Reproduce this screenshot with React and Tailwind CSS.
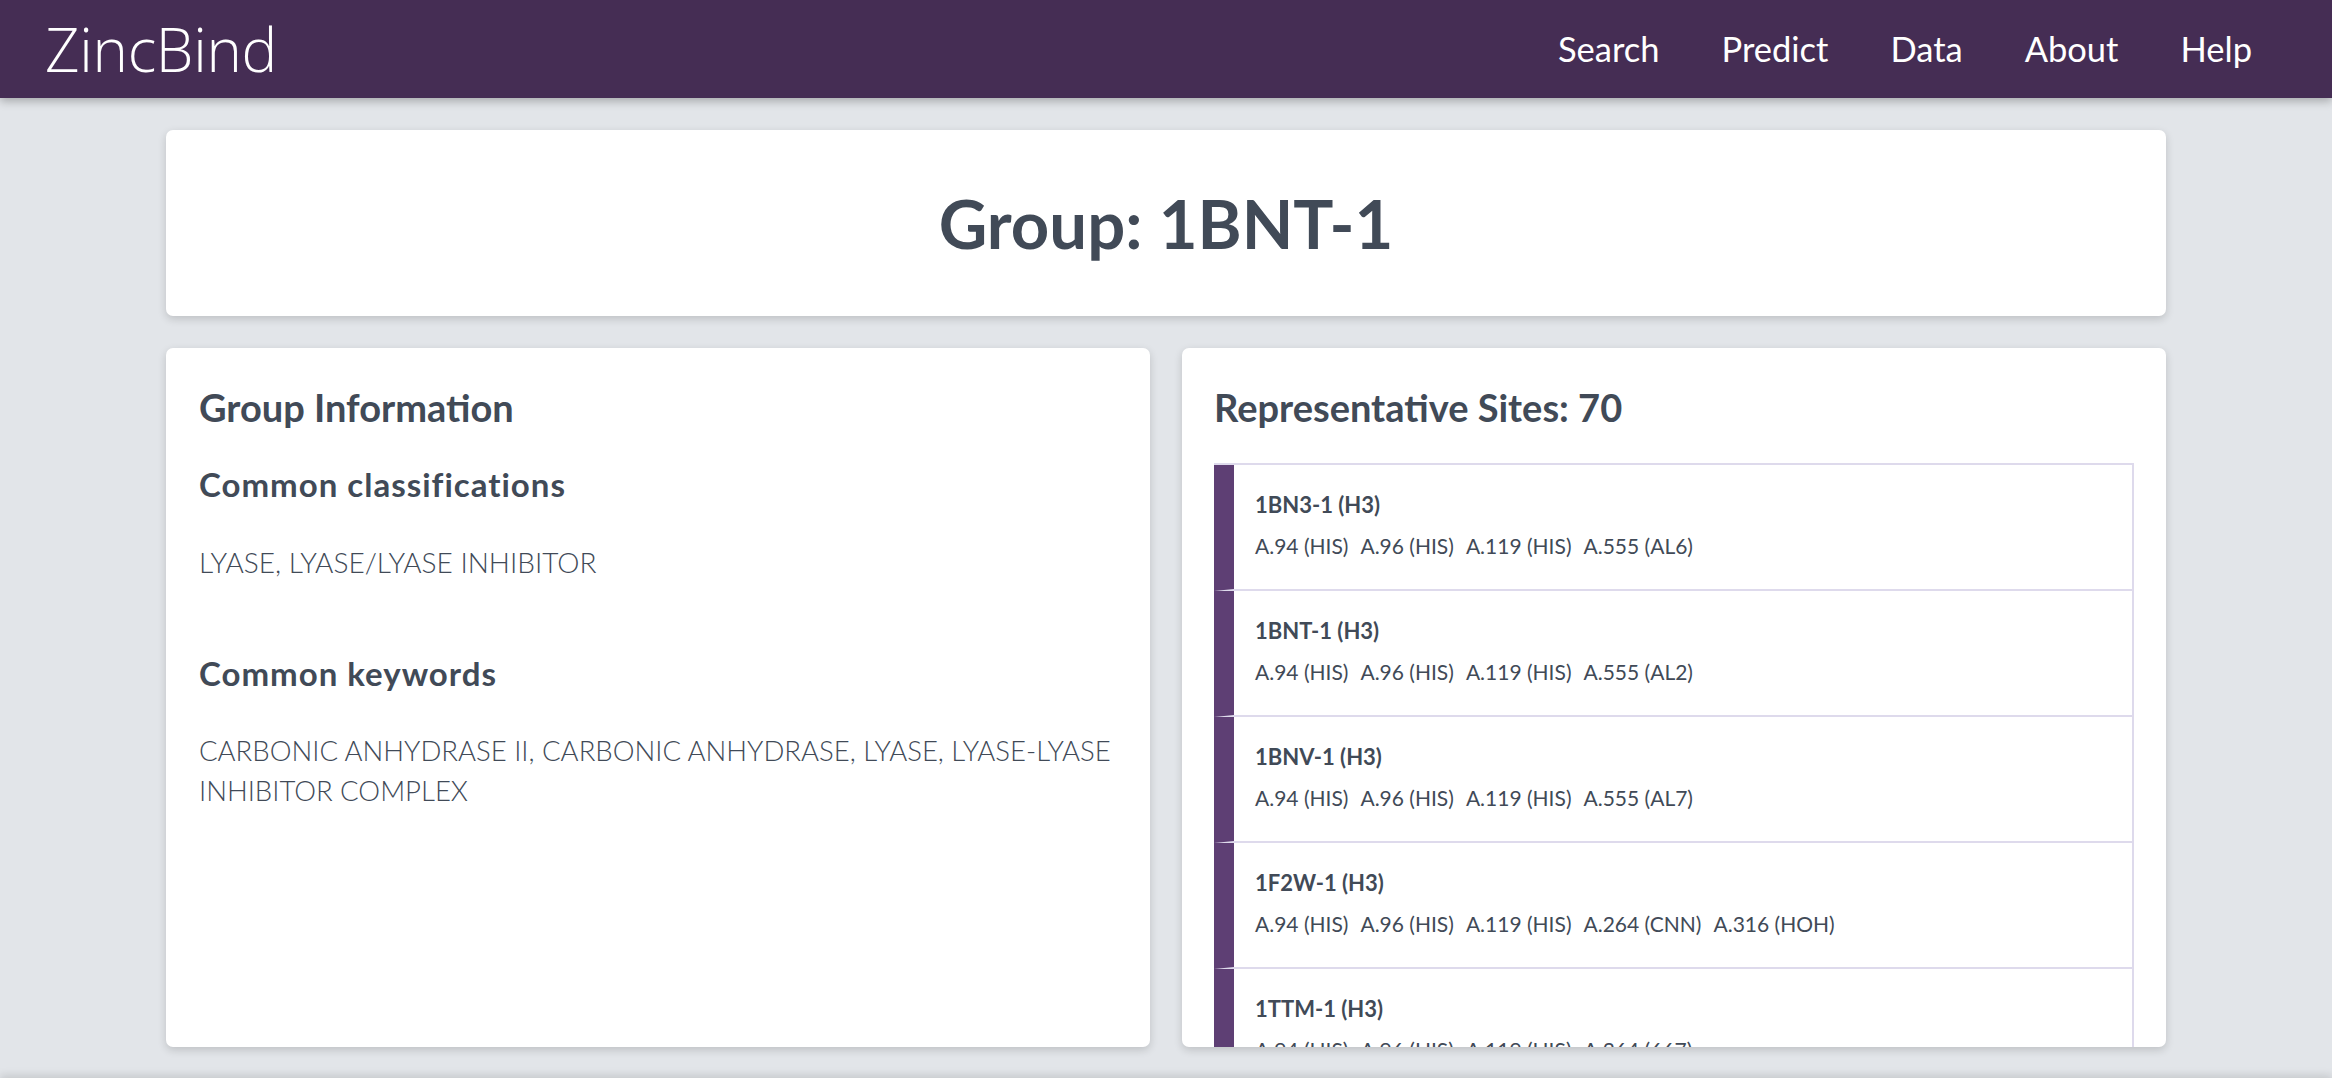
import React from "react";

const sites = [
  { name: "1BN3-1 (H3)", res: ["A.94 (HIS)", "A.96 (HIS)", "A.119 (HIS)", "A.555 (AL6)"] },
  { name: "1BNT-1 (H3)", res: ["A.94 (HIS)", "A.96 (HIS)", "A.119 (HIS)", "A.555 (AL2)"] },
  { name: "1BNV-1 (H3)", res: ["A.94 (HIS)", "A.96 (HIS)", "A.119 (HIS)", "A.555 (AL7)"] },
  { name: "1F2W-1 (H3)", res: ["A.94 (HIS)", "A.96 (HIS)", "A.119 (HIS)", "A.264 (CNN)", "A.316 (HOH)"] },
  { name: "1TTM-1 (H3)", res: ["A.94 (HIS)", "A.96 (HIS)", "A.119 (HIS)", "A.264 (667)"] },
  { name: "1ZE8-1 (H3)", res: ["A.94 (HIS)", "A.96 (HIS)", "A.119 (HIS)"] },
];

export default function App() {
  return (
    <div className="min-h-screen bg-[#e2e5e9] font-['Lato',sans-serif] text-[#414a57]">
      <header className="relative z-10 flex h-[98px] items-center justify-between bg-[#452d54] pl-[45px] pr-[80px] shadow-[0_3px_9px_rgba(0,0,0,0.28)]">
        <div className="font-['Open_Sans',sans-serif] text-[60px] font-light leading-none tracking-[-0.3px] text-white">
          ZincBind
        </div>
        <nav className="flex items-center gap-[62px] text-[34.5px] leading-none text-white">
          <span>Search</span>
          <span>Predict</span>
          <span>Data</span>
          <span>About</span>
          <span>Help</span>
        </nav>
      </header>

      <main className="mx-auto flex w-[2000px] flex-col gap-[32px] pt-[32px]">
        <section className="flex h-[186px] items-center justify-center rounded-[7px] bg-white shadow-[0_3px_8px_rgba(0,0,0,0.16)]">
          <h1 className="text-[67px] font-bold leading-none">Group: 1BNT-1</h1>
        </section>

        <div className="grid h-[699px] grid-cols-2 gap-[32px]">
          <section className="overflow-hidden rounded-[7px] bg-white pl-[33px] pr-[24px] pt-[37px] shadow-[0_3px_8px_rgba(0,0,0,0.16)]">
            <h2 className="text-[38px] font-bold leading-[44px]">Group Information</h2>
            <h3 className="mt-[36px] text-[33px] font-bold leading-[38px] tracking-[1px]">Common classifications</h3>
            <p className="mt-[39px] text-[28px] font-light leading-[40px]">LYASE, LYASE/LYASE INHIBITOR</p>
            <h3 className="mt-[72px] text-[33px] font-bold leading-[38px] tracking-[1px]">Common keywords</h3>
            <p className="mt-[39px] text-[27.5px] font-light leading-[40px]">
              CARBONIC ANHYDRASE II, CARBONIC ANHYDRASE, LYASE, LYASE&#8209;LYASE INHIBITOR COMPLEX
            </p>
          </section>

          <section className="overflow-hidden rounded-[7px] bg-white px-[32px] pt-[37px] shadow-[0_3px_8px_rgba(0,0,0,0.16)]">
            <h2 className="text-[38px] font-bold leading-[44px]">Representative Sites: 70</h2>
            <div className="mt-[34px] border-r-2 border-t-2 border-[#dedaec]">
              {sites.map((s) => (
                <div
                  key={s.name}
                  className="border-b-2 border-l-[20px] border-b-[#dedaec] border-l-[#5e3f74] pb-[28px] pl-[21px] pt-[26px]"
                >
                  <div className="text-[22px] font-bold leading-[28px]">{s.name}</div>
                  <div className="mt-[12px] flex gap-[12px] text-[21px] leading-[30px]">
                    {s.res.map((r, i) => (
                      <span key={i}>{r}</span>
                    ))}
                  </div>
                </div>
              ))}
            </div>
          </section>
        </div>
      </main>

      <footer className="mt-[31px] h-[120px] bg-[#e2e5e9] shadow-[0_-3px_8px_rgba(0,0,0,0.12)]" />
    </div>
  );
}
